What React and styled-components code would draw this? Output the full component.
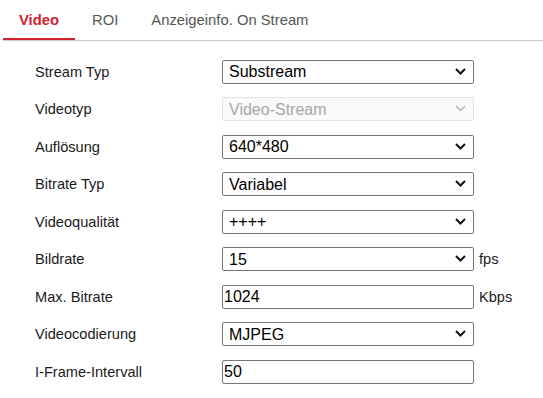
import React from "react";
import styled, { createGlobalStyle } from "styled-components";

const GlobalStyle = createGlobalStyle`
  body {
    margin: 0;
    background: #ffffff;
    font-family: "Liberation Sans", Arial, sans-serif;
  }
`;

const Page = styled.div`
  width: 543px;
  height: 398px;
  overflow: hidden;
`;

const TabBar = styled.div`
  display: flex;
  margin-left: 3px;
  border-bottom: 1px solid #cccccc;
`;

const Tab = styled.div`
  height: 40px;
  padding: 3px 16px 0;
  box-sizing: border-box;
  line-height: 35px;
  font-size: 14.8px;
  margin-right: 1px;
  color: ${(p) => (p.active ? "#d3212c" : "#555555")};
  font-weight: ${(p) => (p.active ? "bold" : "normal")};
  border-bottom: 2px solid ${(p) => (p.active ? "#d3212c" : "transparent")};
`;

const Form = styled.div`
  display: grid;
  grid-template-columns: 187px 252px auto;
  grid-auto-rows: 37.5px;
  align-items: center;
  padding: 12px 0 0 35px;
`;

const Label = styled.div`
  font-size: 14.6px;
  color: #1a1a1a;
`;

const SelectWrap = styled.div`
  position: relative;
  height: 24px;
`;

const Select = styled.select`
  appearance: none;
  width: 252px;
  height: 24px;
  box-sizing: border-box;
  margin: 0;
  padding: 0 0 0 6px;
  font-family: "Liberation Sans", Arial, sans-serif;
  font-size: 16px;
  color: ${(p) => (p.disabled ? "#a6a6a6" : "#000000")};
  background: ${(p) => (p.disabled ? "#fafafa" : "#ffffff")};
  border: 1px solid ${(p) => (p.disabled ? "#e2e2e2" : "#767676")};
  border-radius: 2px;
  outline: none;
  opacity: 1;
`;

const Chevron = styled.svg`
  position: absolute;
  right: 8px;
  top: 8px;
  pointer-events: none;
`;

const Input = styled.input`
  width: 252px;
  height: 24px;
  box-sizing: border-box;
  margin: 0;
  padding: 0 0 0 1px;
  font-family: "Liberation Sans", Arial, sans-serif;
  font-size: 16px;
  color: #000000;
  border: 1px solid #767676;
  border-radius: 2px;
  outline: none;
`;

const Unit = styled.span`
  font-size: 14.6px;
  color: #1a1a1a;
  margin-left: 5px;
`;

const Dropdown = ({ value, disabled }) => (
  <SelectWrap>
    <Select disabled={disabled} defaultValue={value}>
      <option>{value}</option>
    </Select>
    <Chevron width="11" height="7" viewBox="0 0 11 7">
      <path
        d="M1 1 L5.5 5.5 L10 1"
        fill="none"
        stroke={disabled ? "#b0b0b0" : "#111111"}
        strokeWidth={disabled ? 1.3 : 2}
      />
    </Chevron>
  </SelectWrap>
);

const rows = [
  { label: "Stream Typ", type: "select", value: "Substream" },
  { label: "Videotyp", type: "select", value: "Video-Stream", disabled: true },
  { label: "Auflösung", type: "select", value: "640*480" },
  { label: "Bitrate Typ", type: "select", value: "Variabel" },
  { label: "Videoqualität", type: "select", value: "++++" },
  { label: "Bildrate", type: "select", value: "15", unit: "fps" },
  { label: "Max. Bitrate", type: "input", value: "1024", unit: "Kbps" },
  { label: "Videocodierung", type: "select", value: "MJPEG" },
  { label: "I-Frame-Intervall", type: "input", value: "50" },
];

export default function App() {
  return (
    <Page>
      <GlobalStyle />
      <TabBar>
        <Tab active>Video</Tab>
        <Tab>ROI</Tab>
        <Tab>Anzeigeinfo. On Stream</Tab>
      </TabBar>
      <Form>
        {rows.map((r) => (
          <React.Fragment key={r.label}>
            <Label>{r.label}</Label>
            {r.type === "select" ? (
              <Dropdown value={r.value} disabled={r.disabled} />
            ) : (
              <Input defaultValue={r.value} />
            )}
            <div>{r.unit && <Unit>{r.unit}</Unit>}</div>
          </React.Fragment>
        ))}
      </Form>
    </Page>
  );
}
